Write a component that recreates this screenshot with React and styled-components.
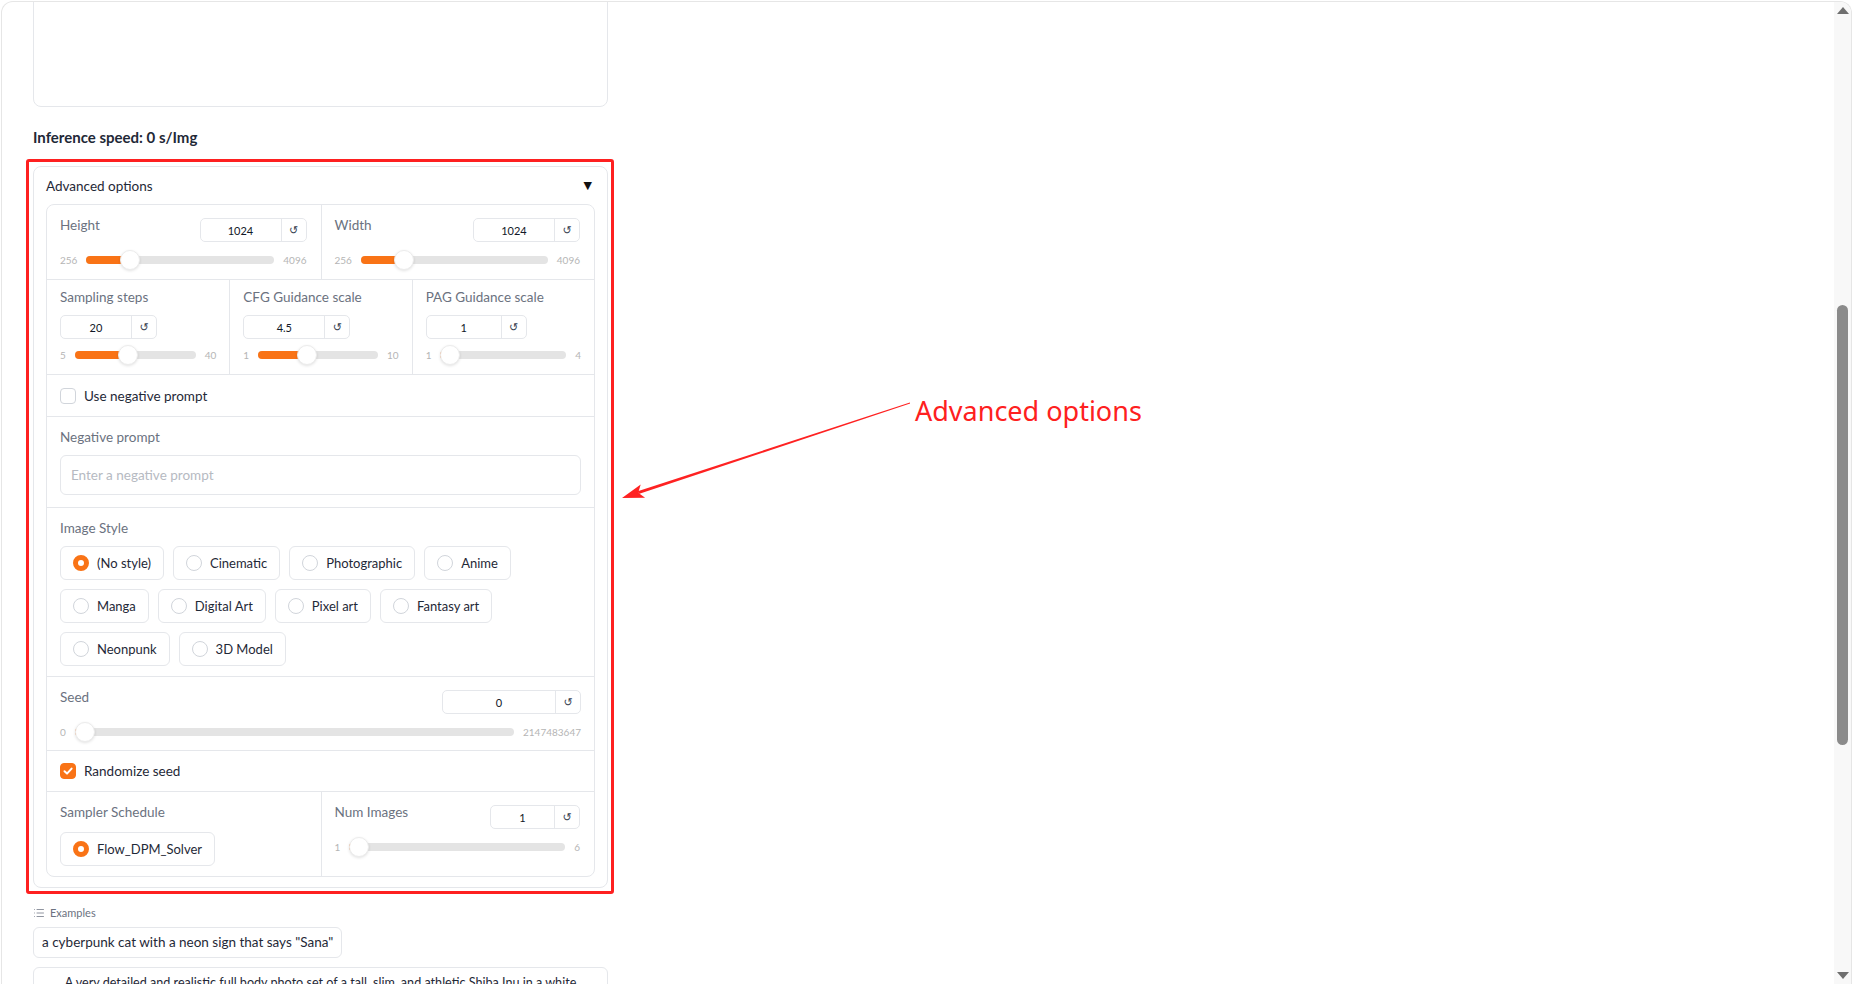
import React from 'react';
import styled, { createGlobalStyle } from 'styled-components';
import { List } from 'lucide-react';

const GlobalStyle = createGlobalStyle`
  html, body {
    margin: 0;
    padding: 0;
    background: #fff;
  }
  body {
    font-family: Lato, "Liberation Sans", sans-serif;
    overflow: hidden;
  }
  * {
    box-sizing: border-box;
  }
`;

const ORANGE = '#f97316';
const LINE = '#e5e7eb';

function Slider({ min, max, value, top }) {
  const pct = (value - min) / (max - min);
  return (
    <SliderRow $top={top}>
      <RangeLabel>{min}</RangeLabel>
      <Track>
        <Fill style={{ width: `calc(10px + ${pct} * (100% - 20px))` }} />
        <Thumb style={{ left: `calc(${pct} * (100% - 20px))` }} />
      </Track>
      <RangeLabel>{max}</RangeLabel>
    </SliderRow>
  );
}

function NumberInput({ value, width, inline }) {
  return (
    <NumberBox $inline={inline}>
      <NumberValue $w={width}>{value}</NumberValue>
      <ResetButton>↺</ResetButton>
    </NumberBox>
  );
}

function InlineField({ label, value, width, min, max, pad }) {
  return (
    <Cell $pad={pad}>
      <FieldHeader>
        <Label>{label}</Label>
        <NumberInput value={value} width={width} inline />
      </FieldHeader>
      <Slider min={min} max={max} value={value} />
    </Cell>
  );
}

function StackedField({ label, value, width, min, max }) {
  return (
    <Cell $pad="7px 13px 9px">
      <Label>{label}</Label>
      <NumberInput value={value} width={width} />
      <Slider min={min} max={max} value={value} top="6px" />
    </Cell>
  );
}

function Check({ checked, children }) {
  return (
    <CheckRow>
      <CheckBox $checked={checked}>
        {checked && (
          <svg width="12" height="12" viewBox="0 0 12 12">
            <path d="M2.5 6.3 L5 8.6 L9.6 3.6" fill="none" stroke="#fff" strokeWidth="2" strokeLinecap="round" strokeLinejoin="round" />
          </svg>
        )}
      </CheckBox>
      <CheckLabel>{children}</CheckLabel>
    </CheckRow>
  );
}

const styles = [
  '(No style)', 'Cinematic', 'Photographic', 'Anime', 'Manga', 'Digital Art',
  'Pixel art', 'Fantasy art', 'Neonpunk', '3D Model',
];

export default function App() {
  return (
    <Page>
      <GlobalStyle />
      <Frame>
        <Main>
          <Column>
            <OutputBox />
            <SpeedTitle>Inference speed: 0 s/Img</SpeedTitle>
            <Highlight>
              <Accordion>
                <AccordionHeader>
                  <span>Advanced options</span>
                  <Caret>▼</Caret>
                </AccordionHeader>
                <OptionsGrid>
                  <Row $cols={2}>
                    <InlineField label="Height" value={1024} width={80} min={256} max={4096} pad="10px 14px 9px 13px" />
                    <InlineField label="Width" value={1024} width={80} min={256} max={4096} pad="10px 14px 9px 13px" />
                  </Row>
                  <Row $cols={3}>
                    <StackedField label="Sampling steps" value={20} width={70} min={5} max={40} />
                    <StackedField label="CFG Guidance scale" value={4.5} width={80} min={1} max={10} />
                    <StackedField label="PAG Guidance scale" value={1} width={74} min={1} max={4} />
                  </Row>
                  <Row>
                    <Cell $pad="13px 13px 12px">
                      <Check>Use negative prompt</Check>
                    </Cell>
                  </Row>
                  <Row>
                    <Cell $pad="10px 13px 12px">
                      <Label>Negative prompt</Label>
                      <TextInput placeholder="Enter a negative prompt" readOnly />
                    </Cell>
                  </Row>
                  <Row>
                    <Cell $pad="10px 13px 10px">
                      <Label>Image Style</Label>
                      <ChipGroup>
                        {styles.map((s, i) => (
                          <Chip key={s}>
                            <RadioDot $checked={i === 0} />
                            {s}
                          </Chip>
                        ))}
                      </ChipGroup>
                    </Cell>
                  </Row>
                  <Row>
                    <Cell $pad="10px 13px 8px">
                      <FieldHeader>
                        <Label>Seed</Label>
                        <NumberInput value={0} width={112} inline />
                      </FieldHeader>
                      <Slider min={0} max={2147483647} value={0} />
                    </Cell>
                  </Row>
                  <Row>
                    <Cell $pad="12px 13px 12px">
                      <Check checked>Randomize seed</Check>
                    </Cell>
                  </Row>
                  <Row $cols={2}>
                    <Cell $pad="10px 13px 10px">
                      <Label>Sampler Schedule</Label>
                      <ChipGroup $gap="10px">
                        <Chip>
                          <RadioDot $checked />
                          Flow_DPM_Solver
                        </Chip>
                      </ChipGroup>
                    </Cell>
                    <InlineField label="Num Images" value={1} width={63} min={1} max={6} />
                  </Row>
                </OptionsGrid>
              </Accordion>
            </Highlight>
            <ExamplesLabel>
              <List size={12} strokeWidth={1.5} />
              Examples
            </ExamplesLabel>
            <ExampleList>
              <ExampleButton>a cyberpunk cat with a neon sign that says "Sana"</ExampleButton>
              <ExampleButton $wide>
                A very detailed and realistic full body photo set of a tall, slim, and athletic Shiba Inu in a white
                <br />
                oversized straw hat, soaking up the sun on a tropical beach
              </ExampleButton>
            </ExampleList>
          </Column>
        </Main>
        <ScrollBar>
          <ScrollArrow>
            <svg width="12" height="7" viewBox="0 0 12 7"><polygon points="6,0 12,7 0,7" fill="#6f6f6f" /></svg>
          </ScrollArrow>
          <ScrollTrack>
            <ScrollThumb />
          </ScrollTrack>
          <ScrollArrow>
            <svg width="12" height="7" viewBox="0 0 12 7"><polygon points="0,0 12,0 6,7" fill="#6f6f6f" /></svg>
          </ScrollArrow>
        </ScrollBar>
      </Frame>

      <ArrowLayer width="1000" height="600" viewBox="0 0 1000 600">
        <polygon points="638.7,494.1 637.7,491.3 909.9,402.6 910.1,403.4" fill="#fe2222" />
        <polygon points="622,498 640.7,484.5 638.2,492.7 645.1,497.8" fill="#fe2222" />
      </ArrowLayer>
      <AnnotationText>Advanced options</AnnotationText>
    </Page>
  );
}

const Page = styled.div`
  position: relative;
  width: 100vw;
  height: 100vh;
  overflow: hidden;
  background: #fff;
`;

const Frame = styled.div`
  display: flex;
  height: calc(100vh - 1px);
  margin: 1px 0 0 1px;
  border: 1px solid #e6e6e6;
  border-bottom: none;
  border-radius: 12px 12px 0 0;
  overflow: hidden;
`;

const Main = styled.div`
  flex: 1;
  padding-left: 31px;
  overflow: hidden;
`;

const Column = styled.div`
  width: 575px;
  display: flex;
  flex-direction: column;
`;

const OutputBox = styled.div`
  margin-top: -30px;
  height: 135px;
  border: 1px solid ${LINE};
  border-radius: 8px;
  background: #fff;
`;

const SpeedTitle = styled.div`
  margin-top: 19px;
  line-height: 22px;
  font-size: 15px;
  font-weight: 700;
  color: #1f2937;
`;

const Highlight = styled.div`
  margin: 11px -6px 0 -7px;
  padding: 4px 3px 3px 4px;
  border: 3px solid #fe2020;
  border-radius: 3px;
`;

const Accordion = styled.div`
  border: 1px solid ${LINE};
  border-radius: 8px;
  padding: 0 12px 10px;
  background: #fff;
`;

const AccordionHeader = styled.div`
  display: flex;
  justify-content: space-between;
  align-items: center;
  padding: 9px 0 8px;
  line-height: 20px;
  font-size: 13.5px;
  color: #1f2937;
`;

const Caret = styled.span`
  font-family: "DejaVu Sans", sans-serif;
  font-size: 11px;
  color: #111;
  margin-right: 3px;
`;

const OptionsGrid = styled.div`
  border: 1px solid ${LINE};
  border-radius: 8px;
  background: #fff;
`;

const Row = styled.div`
  display: grid;
  grid-template-columns: repeat(${p => p.$cols || 1}, 1fr);
  & + & {
    border-top: 1px solid ${LINE};
  }
`;

const Cell = styled.div`
  display: flex;
  flex-direction: column;
  min-width: 0;
  padding: ${p => p.$pad || '10px 14px 10px 13px'};
  & + & {
    border-left: 1px solid ${LINE};
  }
`;

const FieldHeader = styled.div`
  display: flex;
  justify-content: space-between;
  align-items: flex-start;
`;

const Label = styled.div`
  font-size: 13.5px;
  line-height: 20px;
  color: #6b7280;
`;

const NumberBox = styled.div`
  display: flex;
  align-self: flex-start;
  height: 24px;
  margin-top: ${p => (p.$inline ? '3px' : '8px')};
  border: 1px solid ${LINE};
  border-radius: 5px;
  background: #fff;
`;

const NumberValue = styled.div`
  width: ${p => p.$w}px;
  display: flex;
  align-items: center;
  justify-content: center;
  font-size: 11px;
  color: #111827;
`;

const ResetButton = styled.div`
  width: 25px;
  display: flex;
  align-items: center;
  justify-content: center;
  border-left: 1px solid ${LINE};
  font-family: "DejaVu Sans", sans-serif;
  font-size: 11px;
  color: #374151;
`;

const SliderRow = styled.div`
  display: flex;
  align-items: center;
  gap: 9px;
  height: 20px;
  margin-top: ${p => p.$top || '8px'};
`;

const RangeLabel = styled.span`
  font-size: 10px;
  color: #b5b5b5;
`;

const Track = styled.div`
  position: relative;
  flex: 1;
  height: 8px;
  border-radius: 4px;
  background: #e4e4e4;
`;

const Fill = styled.div`
  position: absolute;
  left: 0;
  top: 0;
  bottom: 0;
  border-radius: 4px;
  background: ${ORANGE};
`;

const Thumb = styled.div`
  position: absolute;
  top: 50%;
  width: 20px;
  height: 20px;
  margin-top: -10px;
  border-radius: 50%;
  background: #fff;
  border: 1px solid #ececec;
  box-shadow: 0 1px 3px rgba(0, 0, 0, 0.12);
`;

const CheckRow = styled.label`
  display: flex;
  align-items: center;
  gap: 8px;
  height: 16px;
`;

const CheckBox = styled.span`
  width: 16px;
  height: 16px;
  display: flex;
  align-items: center;
  justify-content: center;
  border-radius: 4px;
  border: 1px solid ${p => (p.$checked ? ORANGE : '#d1d5db')};
  background: ${p => (p.$checked ? ORANGE : '#fff')};
`;

const CheckLabel = styled.span`
  font-size: 13.5px;
  color: #1f2937;
`;

const TextInput = styled.input`
  margin-top: 8px;
  height: 40px;
  width: 100%;
  padding: 0 10px;
  border: 1px solid ${LINE};
  border-radius: 6px;
  font-family: inherit;
  font-size: 13.5px;
  color: #1f2937;
  outline: none;
  &::placeholder {
    color: #b6bac2;
  }
`;

const ChipGroup = styled.div`
  display: flex;
  flex-wrap: wrap;
  gap: 9px;
  margin-top: ${p => p.$gap || '8px'};
`;

const Chip = styled.div`
  display: inline-flex;
  align-items: center;
  gap: 8px;
  height: 34px;
  padding: 0 12px;
  border: 1px solid ${LINE};
  border-radius: 6px;
  background: #fff;
  font-size: 13px;
  color: #1f2937;
`;

const RadioDot = styled.span`
  width: 16px;
  height: 16px;
  border-radius: 50%;
  background: #fff;
  border: ${p => (p.$checked ? `5px solid ${ORANGE}` : '1px solid #d1d5db')};
`;

const ExamplesLabel = styled.div`
  display: flex;
  align-items: center;
  gap: 5px;
  margin-top: 11px;
  line-height: 16px;
  font-size: 11px;
  color: #6b7280;
`;

const ExampleList = styled.div`
  display: flex;
  flex-direction: column;
  align-items: flex-start;
  gap: 9px;
  margin-top: 6px;
`;

const ExampleButton = styled.div`
  max-width: 100%;
  width: ${p => (p.$wide ? '100%' : 'auto')};
  padding: 5px 8px;
  line-height: 19px;
  border: 1px solid ${LINE};
  border-radius: 6px;
  background: #fff;
  text-align: center;
  font-size: ${p => (p.$wide ? '12.6px' : '13.5px')};
  color: #1f2937;
  white-space: ${p => (p.$wide ? 'nowrap' : 'normal')};
  overflow: hidden;
`;

const ScrollBar = styled.div`
  width: 17px;
  display: flex;
  flex-direction: column;
  background: #f8f8f8;
`;

const ScrollArrow = styled.div`
  height: 17px;
  display: flex;
  align-items: center;
  justify-content: center;
`;

const ScrollTrack = styled.div`
  flex: 1;
  padding-top: 286px;
`;

const ScrollThumb = styled.div`
  width: 11px;
  height: 440px;
  margin: 0 auto;
  border-radius: 6px;
  background: #8b8b8b;
`;

const ArrowLayer = styled.svg`
  position: absolute;
  left: 0;
  top: 0;
  pointer-events: none;
`;

const AnnotationText = styled.div`
  position: absolute;
  left: 915px;
  top: 395px;
  font-family: "Noto Sans", "Open Sans", sans-serif;
  font-size: 27px;
  line-height: 32px;
  color: #fe2020;
  white-space: nowrap;
`;
